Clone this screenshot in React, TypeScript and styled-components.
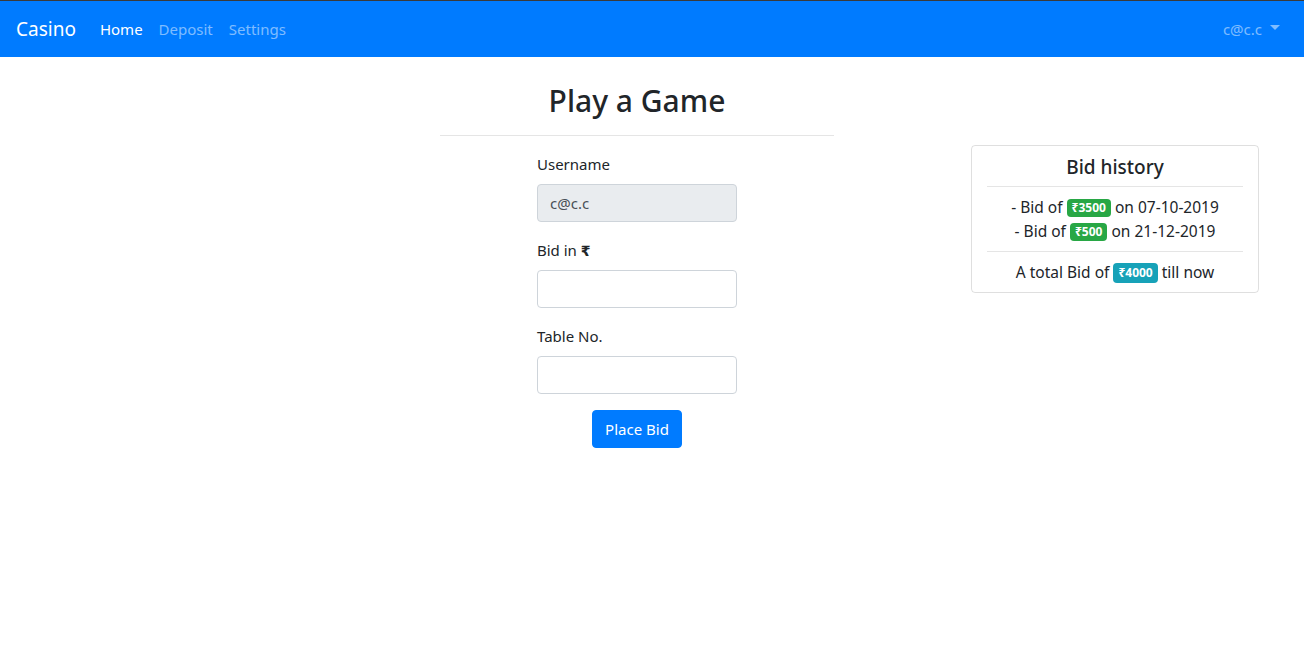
import styled, { createGlobalStyle } from "styled-components";

const GlobalStyle = createGlobalStyle`
  html, body {
    margin: 0;
    padding: 0;
    background: #fff;
  }
  body {
    border-top: 1px solid #3a3a3a;
    font-family: "Noto Sans", "Open Sans", sans-serif;
    font-size: 15px;
    line-height: 24px;
    color: #212529;
  }
  * {
    box-sizing: border-box;
  }
`;

const Navbar = styled.nav`
  height: 56px;
  background: #007bff;
  display: flex;
  align-items: center;
  padding: 0 16px;
`;

const Brand = styled.a`
  font-size: 19px;
  line-height: 30px;
  color: #fff;
  margin-right: 16px;
  text-decoration: none;
`;

const NavLinks = styled.div`
  display: flex;
  align-items: center;
  flex: 1;
`;

const NavLink = styled.a<{ $active?: boolean }>`
  padding: 8px;
  color: ${(p) => (p.$active ? "#fff" : "rgba(255,255,255,0.5)")};
  text-decoration: none;
`;

const UserMenu = styled.a`
  padding: 8px;
  color: rgba(255, 255, 255, 0.5);
  display: flex;
  align-items: center;
  text-decoration: none;
`;

const Caret = styled.span`
  display: inline-block;
  margin-left: 8px;
  width: 0;
  height: 0;
  border-top: 5px solid rgba(255, 255, 255, 0.5);
  border-left: 5px solid transparent;
  border-right: 5px solid transparent;
  margin-top: -3px;
`;

const Content = styled.div`
  display: flex;
  align-items: flex-start;
  padding-left: 440px;
  padding-right: 45px;
`;

const Main = styled.main`
  width: 394px;
  padding-top: 16px;
`;

const Title = styled.h2`
  margin: 0;
  padding-top: 10px;
  font-size: 30px;
  font-weight: 500;
  line-height: 36px;
  text-align: center;
`;

const Rule = styled.hr<{ $top?: number; $bottom?: number }>`
  border: 0;
  border-top: 1px solid rgba(0, 0, 0, 0.1);
  margin: ${(p) => p.$top ?? 16}px 0 ${(p) => p.$bottom ?? 16}px;
`;

const Form = styled.form`
  width: 200px;
  margin: 0 auto;
  display: flex;
  flex-direction: column;
`;

const Group = styled.div`
  margin-bottom: 16px;
  display: flex;
  flex-direction: column;
`;

const Label = styled.label`
  height: 24px;
  margin-bottom: 8px;
`;

const Rupee = styled.span`
  font-family: "DejaVu Sans", sans-serif;
  font-weight: 700;
  font-size: 14px;
  line-height: 1;
`;

const Input = styled.input`
  height: 38px;
  padding: 6px 12px;
  font: inherit;
  color: #495057;
  background: #fff;
  border: 1px solid #ced4da;
  border-radius: 4px;
  &:read-only {
    background: #e9ecef;
  }
`;

const Button = styled.button`
  align-self: center;
  height: 38px;
  padding: 6px 12px;
  font: inherit;
  color: #fff;
  background: #007bff;
  border: 1px solid #007bff;
  border-radius: 4px;
`;

const Aside = styled.aside`
  margin-left: auto;
  margin-top: 88px;
  width: 288px;
`;

const Card = styled.div`
  border: 1px solid rgba(0, 0, 0, 0.125);
  border-radius: 4px;
  padding: 9px 15px 8px;
  text-align: center;
`;

const CardTitle = styled.h5`
  margin: 0;
  font-size: 19px;
  font-weight: 500;
  line-height: 24px;
`;

const Line = styled.div`
  font-size: 15.5px;
  line-height: 24px;
`;

const Badge = styled.span<{ $tone: "success" | "info"; $tall?: boolean }>`
  display: inline-block;
  padding: ${(p) => (p.$tall ? "4px 5px" : "3px 5px")};
  font-size: 12px;
  font-weight: 700;
  line-height: 1;
  color: #fff;
  border-radius: 4px;
  vertical-align: 1px;
  background: ${(p) => (p.$tone === "success" ? "#28a745" : "#17a2b8")};
`;

const bids = [
  { amount: 3500, date: "07-10-2019" },
  { amount: 500, date: "21-12-2019" },
];

export default function App() {
  const total = bids.reduce((s, b) => s + b.amount, 0);
  return (
    <>
      <GlobalStyle />
      <Navbar>
        <Brand href="#">Casino</Brand>
        <NavLinks>
          <NavLink $active href="#">Home</NavLink>
          <NavLink href="#">Deposit</NavLink>
          <NavLink href="#">Settings</NavLink>
        </NavLinks>
        <UserMenu href="#">
          c@c.c
          <Caret />
        </UserMenu>
      </Navbar>
      <Content>
        <Main>
          <Title>Play a Game</Title>
          <Rule />
          <Form onSubmit={(e) => e.preventDefault()}>
            <Group>
              <Label>Username</Label>
              <Input readOnly value="c@c.c" />
            </Group>
            <Group>
              <Label>
                Bid in <Rupee>₹</Rupee>
              </Label>
              <Input type="number" />
            </Group>
            <Group>
              <Label>Table No.</Label>
              <Input type="number" />
            </Group>
            <Button type="submit">Place Bid</Button>
          </Form>
        </Main>
        <Aside>
          <Card>
            <CardTitle>Bid history</CardTitle>
            <Rule $top={7} $bottom={8} />
            {bids.map((b) => (
              <Line key={b.date}>
                - Bid of <Badge $tone="success">₹{b.amount}</Badge> on {b.date}
              </Line>
            ))}
            <Rule $top={8} $bottom={8} />
            <Line>
              A total Bid of <Badge $tone="info" $tall>₹{total}</Badge> till now
            </Line>
          </Card>
        </Aside>
      </Content>
    </>
  );
}
